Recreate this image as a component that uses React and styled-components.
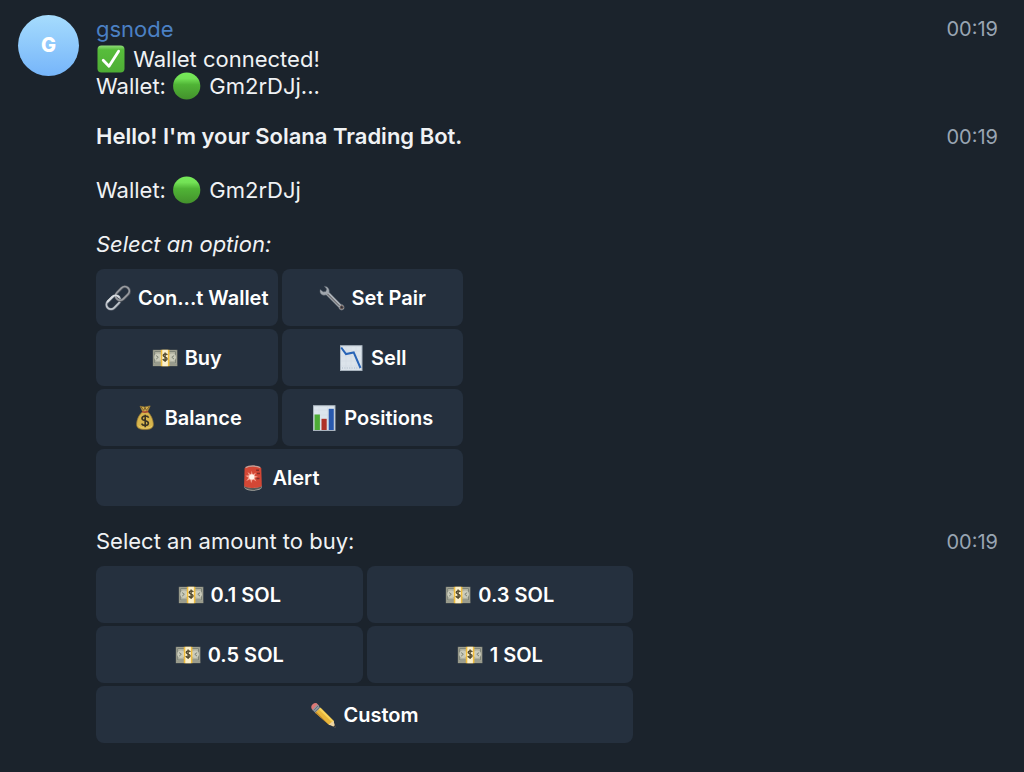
import React from "react";
import styled, { createGlobalStyle } from "styled-components";

const GlobalStyle = createGlobalStyle`
  * { box-sizing: border-box; }
  body {
    margin: 0;
    background: #1b232c;
    color: #f0f2f4;
    font-family: Inter, "Liberation Sans", sans-serif;
    font-size: 22px;
    line-height: 27px;
  }
`;

const Chat = styled.main`
  display: grid;
  grid-template-columns: 61px minmax(0, 1fr);
  column-gap: 17px;
  padding: 15px 26px 29px 18px;
`;

const Avatar = styled.div`
  display: flex;
  align-items: center;
  justify-content: center;
  width: 61px;
  height: 61px;
  border-radius: 50%;
  background: linear-gradient(#a6dcfd, #76b5fa);
  color: #fff;
  font-size: 20px;
  font-weight: 800;
`;

const Messages = styled.div`
  display: flex;
  flex-direction: column;
  gap: 22px;
`;

const Message = styled.article`
  display: flex;
  align-items: flex-start;
  justify-content: space-between;
  gap: 16px;

  &:first-child {
    padding-bottom: 1px;
  }
`;

const Body = styled.div`
  flex: 1;
  min-width: 0;
`;

const Author = styled.a`
  display: block;
  margin: 1px 0 3px;
  color: #4b80c4;
  text-decoration: none;
`;

const Text = styled.p`
  margin: 0;
  white-space: pre-wrap;
`;

const Title = styled.strong`
  font-weight: 600;
`;

const Time = styled.time`
  color: #99a5b3;
  font-size: 20px;
  line-height: 29px;
`;

const InlineEmoji = styled.svg`
  width: 28px;
  height: 28px;
  margin: -4px 2px -4px 1px;
  vertical-align: -2px;
`;

const Keyboard = styled.div`
  display: grid;
  grid-template-columns: 1fr 1fr;
  gap: 3px 4px;
  max-width: ${(p) => p.$width};
  margin-top: 11px;
`;

const Key = styled.button`
  display: flex;
  align-items: center;
  justify-content: center;
  gap: 7px;
  height: 57px;
  padding: 0 8px;
  grid-column: ${(p) => (p.$wide ? "1 / -1" : "auto")};
  border: 0;
  border-radius: 8px;
  background: #25303e;
  color: #fff;
  font: 600 20px/27px Inter, "Liberation Sans", sans-serif;
  white-space: nowrap;
  cursor: pointer;
`;

const KeyLabel = styled.span`
  padding-top: 2px;
`;

const KeyIcon = styled.svg`
  flex: none;
  width: 26px;
  height: 26px;
`;

const Check = () => (
  <InlineEmoji viewBox="0 0 28 28" role="img" aria-label="Done">
    <defs>
      <linearGradient id="check" x1="0" y1="0" x2="0" y2="1">
        <stop offset="0" stopColor="#8fdc78" />
        <stop offset=".16" stopColor="#57bd3b" />
        <stop offset="1" stopColor="#4ead35" />
      </linearGradient>
    </defs>
    <rect x=".5" y=".5" width="27" height="27" rx="4" fill="url(#check)" />
    <path d="M6.2 15.2L12 21.3L21.6 6.2" fill="none" stroke="#fff" strokeWidth="2.8" strokeLinecap="round" strokeLinejoin="round" />
  </InlineEmoji>
);

const GreenDot = () => (
  <InlineEmoji viewBox="0 0 28 28" role="img" aria-label="Online">
    <defs>
      <linearGradient id="dot" x1="0" y1="0" x2="0" y2="1">
        <stop offset="0" stopColor="#76ea59" />
        <stop offset=".22" stopColor="#73e256" />
        <stop offset=".45" stopColor="#50b436" />
        <stop offset="1" stopColor="#43912c" />
      </linearGradient>
    </defs>
    <circle cx="13.7" cy="14" r="13.6" fill="url(#dot)" />
  </InlineEmoji>
);

const icons = {
  link: (
    <g fill="none" strokeLinecap="round">
      <g transform="rotate(-45 13 13)">
        <rect x="-1.2" y="8.4" width="15.6" height="9" rx="4.5" stroke="#59616d" strokeWidth="3" />
        <rect x="-1.2" y="8.2" width="15.6" height="9" rx="4.5" stroke="#bfc5cb" strokeWidth="1.7" />
        <rect x="11.6" y="8.6" width="15.6" height="9" rx="4.5" stroke="#50545c" strokeWidth="3" />
        <rect x="11.6" y="8.4" width="15.6" height="9" rx="4.5" stroke="#9a9da2" strokeWidth="1.7" />
        <path d="M3.3 8.2H10a4.5 4.5 0 0 1 4.4 4.5" stroke="#d8dde1" strokeWidth="2" />
      </g>
    </g>
  ),
  wrench: (
    <g>
      <path d="M5.2 1.2L7.6 4L6.8 6.5L4.2 6.8L1.2 4.4C.2 7.6 2.1 10.3 5.4 10.2L7.2 9.9L19.6 22.4C20.3 24.3 21.6 25.4 23.2 25.1C25 24.8 25.7 23 25 21.3C24.5 20 23.3 19.3 21.9 19.2L10.2 7.3C10.9 4 8.5 1.1 5.2 1.2Z" fill="#a1a7ae" stroke="#535a64" strokeWidth=".5" />
      <path d="M8.4 8.8L20.4 20.8" stroke="#5b5657" strokeWidth="1" />
      <path d="M10.2 8.7L20.9 19.4" stroke="#c3c8cd" strokeWidth=".7" />
      <circle cx="22.7" cy="22.3" r="1.5" fill="#27303d" stroke="#71584f" strokeWidth="1" />
    </g>
  ),
  money: (
    <g>
      <rect x=".8" y="4.8" width="24.6" height="16.4" fill="#86877b" />
      <rect x="1.6" y="5.4" width="23" height="13.8" fill="#b0b1a0" />
      <rect x="2.7" y="6.6" width="20.8" height="11.4" fill="none" stroke="#747b70" strokeWidth=".8" />
      <path d="M1 20.1H25.2" stroke="#b4b5a1" strokeWidth=".8" />
      <circle cx="6" cy="12.3" r="3.7" fill="#cacbba" />
      <circle cx="20.2" cy="12.3" r="3.7" fill="#cacbba" />
      <path d="M4.1 10.6L6.3 12.3L4.2 14.1M22.1 10.6L19.8 12.3L22 14.1" fill="none" stroke="#7c8276" strokeWidth="1" />
      <ellipse cx="13" cy="12.3" rx="5" ry="5.7" fill="#e1dcc3" />
      <path d="M8.8 4.8H17.4V21.2H8.8Z" fill="#f0bd3c" />
      <path d="M10.3 4.8H15.9V21.2H10.3Z" fill="#faf0cd" />
      <path d="M15.2 9.9C14.6 8.4 11.3 8.5 11.2 10.4C11.1 12.5 15.2 11.6 15.1 14C14.9 15.9 11.6 16 10.9 14.1M13.1 7.5V16.9" fill="none" stroke="#51492f" strokeWidth="1.4" />
    </g>
  ),
  falling: (
    <g>
      <rect x="2.5" y=".7" width="21.5" height="25" fill="#dce4eb" stroke="#a9b4bf" />
      <path d="M3 6H23.5M3 11H23.5M3 16H23.5M3 21H23.5M8 1V25M13 1V25M18 1V25" stroke="#d2dae2" strokeWidth=".5" />
      <path d="M4 23H23" stroke="#9aaabd" strokeWidth=".7" strokeDasharray="1 1.4" />
      <path d="M3.2 2.5L8 9.1L15.7 7.4L22.5 23" fill="none" stroke="#2864b7" strokeWidth="2" />
    </g>
  ),
  bag: (
    <g>
      <path d="M8 1.2L12.6 2L18.2 .9L15.5 6.8C18.8 9.4 21.2 14.2 21.4 19C21.5 23 18.5 24.6 13 24.6C7.3 24.6 4.4 23 4.6 18.8C4.8 14 7.3 9.1 10.7 6.8Z" fill="#d7b54d" stroke="#927432" strokeWidth=".7" />
      <path d="M9.1 1.9L11.8 5.5L13 2.3L14.3 5.4L17 2" fill="none" stroke="#75572d" strokeWidth=".9" />
      <path d="M10 6.5Q13 7.7 16.1 6.4" fill="none" stroke="#a84b32" strokeWidth="1.7" />
      <path d="M6.2 20.5C7.6 23.1 17.2 24.3 20 20.9" fill="none" stroke="#e9cc68" strokeWidth="1" />
      <path d="M16.6 12.7C15.8 10.3 10.2 10.5 10 13.4C9.8 16.6 16.6 14.8 16.4 18.2C16.2 21.1 10.7 21.2 9.6 18.6M13.2 9.7V22.2" fill="none" stroke="#393424" strokeWidth="1.6" />
    </g>
  ),
  bars: (
    <g>
      <rect x="2.5" y=".7" width="21.5" height="25" fill="#dce5ed" stroke="#aab5bf" />
      <path d="M3 5H23.5M3 10H23.5M3 15H23.5M3 20H23.5M8 1V25M16.5 1V25" stroke="#d0d8e0" strokeWidth=".5" />
      <rect x="3.5" y="9.5" width="5.4" height="15.5" fill="#4dac36" />
      <rect x="10.5" y="13.8" width="5.2" height="11.2" fill="#ae3229" />
      <rect x="17.7" y="3.8" width="5.1" height="21.2" fill="#2859ae" />
    </g>
  ),
  siren: (
    <g>
      <path d="M4.3 21.7L5.1 20H21L21.8 21.7C22.7 27.1 3.4 27.1 4.3 21.7Z" fill="#a6a69f" />
      <path d="M4.8 21.3Q13 24.7 21.3 21.3V23Q13 27 4.8 23Z" fill="#575856" />
      <path d="M4.6 3.5C4.8 .4 20.8 .4 21.3 3.5L21.8 20.8C20.4 23.7 5.7 23.7 4.1 20.8Z" fill="#d34735" />
      <path d="M5.6 2.6C9 .5 17.2 .6 20.2 2.6" fill="none" stroke="#cb9e94" strokeWidth="1.4" />
      <path d="M16.2 5.2H19M17 8.6H20M16.5 13.5H19.5" stroke="#822f2b" strokeWidth="1.5" />
      <path d="M11.7 5.7L12.7 9.8L16.1 7.5L14.5 10.8L18 11.8L14.4 12.7L16.4 16.4L12.7 14.2L11.1 18.2L10.3 14.2L6.2 16L8.5 12.7L5.5 10.8L9 10.3L7.5 6.9L11 9.5Z" fill="#f5a594" />
      <circle cx="11.8" cy="11.9" r="2.6" fill="#fff4ec" />
    </g>
  ),
  pencil: (
    <g>
      <path d="M1.2 5.1C1.3 2.7 4.4 .4 6.7 1.3L9.2 3.8L3.7 9.1L1.7 7Z" fill="#dc7775" />
      <path d="M7 2.6L11 6.2L5.8 11.2L2.4 7.9Z" fill="#929aa1" />
      <path d="M8.2 3.7L3.5 8.7M9.7 5.1L4.9 10" stroke="#58636e" strokeWidth=".8" />
      <path d="M10.5 5.7L24 19.3L19.4 23.3L5.2 10.8Z" fill="#e8b63b" />
      <path d="M10.5 5.7L24 19.3L22.5 20.6L8.8 7.2Z" fill="#f8d35b" />
      <path d="M6.6 10L19.4 23.3L5.2 10.8Z" fill="#be862c" />
      <path d="M23.5 18.8L25.4 25.5L18.7 22.5Z" fill="#efd5a1" />
      <path d="M24.8 23.3L25.5 25.6L23.1 24.5Z" fill="#38332e" />
    </g>
  ),
};

function KeyButton({ icon, label, wide }) {
  return (
    <Key type="button" $wide={wide}>
      <KeyIcon viewBox="0 0 26 26" aria-hidden="true">{icons[icon]}</KeyIcon>
      <KeyLabel>{label}</KeyLabel>
    </Key>
  );
}

const mainKeys = [
  { icon: "link", label: "Con...t Wallet" },
  { icon: "wrench", label: "Set Pair" },
  { icon: "money", label: "Buy" },
  { icon: "falling", label: "Sell" },
  { icon: "bag", label: "Balance" },
  { icon: "bars", label: "Positions" },
  { icon: "siren", label: "Alert", wide: true },
];

const amountKeys = [
  { icon: "money", label: "0.1 SOL" },
  { icon: "money", label: "0.3 SOL" },
  { icon: "money", label: "0.5 SOL" },
  { icon: "money", label: "1 SOL" },
  { icon: "pencil", label: "Custom", wide: true },
];

export default function App() {
  return (
    <>
      <GlobalStyle />
      <Chat>
        <Avatar aria-hidden="true">G</Avatar>
        <Messages>
          <Message>
            <Body>
              <Author href="#gsnode">gsnode</Author>
              <Text><Check /> Wallet connected!</Text>
              <Text>Wallet: <GreenDot /> Gm2rDJj...</Text>
            </Body>
            <Time>00:19</Time>
          </Message>
          <Message>
            <Body>
              <Text><Title>Hello! I'm your Solana Trading Bot.</Title></Text>
              <Text>{"\n"}Wallet: <GreenDot /> Gm2rDJj</Text>
              <Text>{"\n"}<em>Select an option:</em></Text>
              <Keyboard $width="367px">
                {mainKeys.map((k) => <KeyButton key={k.label} {...k} />)}
              </Keyboard>
            </Body>
            <Time>00:19</Time>
          </Message>
          <Message>
            <Body>
              <Text>Select an amount to buy:</Text>
              <Keyboard $width="537px">
                {amountKeys.map((k) => <KeyButton key={k.label} {...k} />)}
              </Keyboard>
            </Body>
            <Time>00:19</Time>
          </Message>
        </Messages>
      </Chat>
    </>
  );
}
